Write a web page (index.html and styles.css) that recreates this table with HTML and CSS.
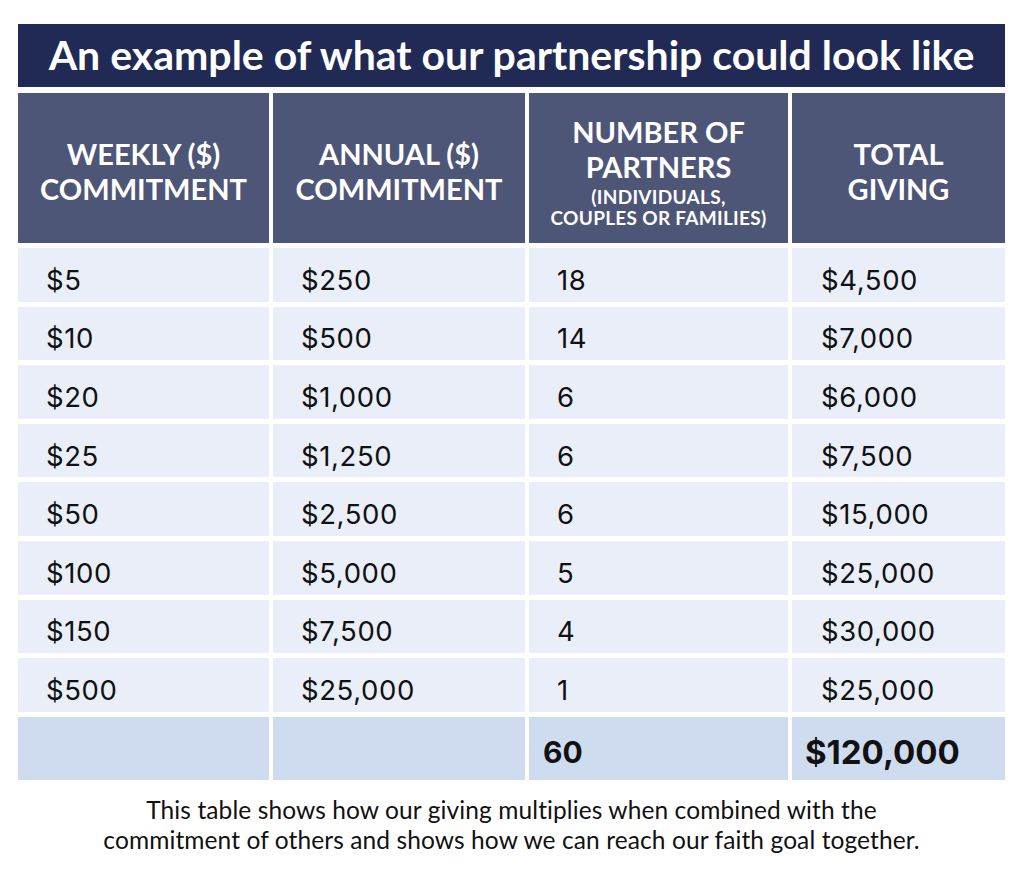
FILE: index.html
```html
<!DOCTYPE html>
<html lang="en">
<head>
<meta charset="utf-8">
<title>Partnership example</title>
<link rel="stylesheet" href="styles.css">
</head>
<body>
<main class="page">
  <h1 class="title">An example of what our partnership could look like</h1>
  <div class="grid">
    <div class="hcell">WEEKLY ($)<br>COMMITMENT</div>
    <div class="hcell">ANNUAL ($)<br>COMMITMENT</div>
    <div class="hcell">NUMBER OF<br>PARTNERS<span class="sub">(INDIVIDUALS,<br>COUPLES OR FAMILIES)</span></div>
    <div class="hcell">TOTAL<br>GIVING</div>

    <div class="cell">$5</div><div class="cell">$250</div><div class="cell">18</div><div class="cell c4">$4,500</div>
    <div class="cell">$10</div><div class="cell">$500</div><div class="cell">14</div><div class="cell c4">$7,000</div>
    <div class="cell">$20</div><div class="cell">$1,000</div><div class="cell">6</div><div class="cell c4">$6,000</div>
    <div class="cell">$25</div><div class="cell">$1,250</div><div class="cell">6</div><div class="cell c4">$7,500</div>
    <div class="cell">$50</div><div class="cell">$2,500</div><div class="cell">6</div><div class="cell c4">$15,000</div>
    <div class="cell">$100</div><div class="cell">$5,000</div><div class="cell">5</div><div class="cell c4">$25,000</div>
    <div class="cell">$150</div><div class="cell">$7,500</div><div class="cell">4</div><div class="cell c4">$30,000</div>
    <div class="cell">$500</div><div class="cell">$25,000</div><div class="cell">1</div><div class="cell c4">$25,000</div>

    <div class="tcell"></div><div class="tcell"></div><div class="tcell num">60</div><div class="tcell big c4">$120,000</div>
  </div>
  <p class="caption">This table shows how our giving multiplies when combined with the<br>commitment of others and shows how we can reach our faith goal together.</p>
</main>
</body>
</html>
```
FILE: styles.css
```css
html, body {
  margin: 0;
  padding: 0;
  background: #ffffff;
}
body {
  font-family: "Lato", "Liberation Sans", sans-serif;
  color: #111111;
}
.page {
  width: 987px;
  margin: 0 0 0 18px;
  padding-top: 24px;
}
.title {
  margin: 0;
  height: 63px;
  background: #202a54;
  color: #ffffff;
  font-size: 41px;
  font-weight: 700;
  line-height: 61px;
  text-align: center;
}
.grid {
  margin-top: 6px;
  display: grid;
  grid-template-columns: 251px 252px 259px 213px;
  grid-template-rows: 150px repeat(8, 53.6px) 63px;
  column-gap: 4px;
  row-gap: 5px;
}
.hcell {
  background: #4e5677;
  color: #ffffff;
  font-weight: 700;
  font-size: 29px;
  line-height: 35px;
  text-align: center;
  display: flex;
  flex-direction: column;
  justify-content: center;
  align-items: center;
  padding-top: 5px;
  box-sizing: border-box;
}
.hcell .sub {
  font-size: 19px;
  line-height: 21px;
  letter-spacing: 0.3px;
  margin-top: 2px;
}
.cell {
  background: #e9eef8;
  font-family: "Inter", "Lato", sans-serif;
  font-size: 27.5px;
  letter-spacing: 0.6px;
  display: flex;
  align-items: center;
  padding-left: 28px;
  padding-top: 10px;
  box-sizing: border-box;
}
.cell.c4 {
  padding-left: 29px;
}
.tcell {
  background: #cfdcef;
  font-family: "Inter", "Lato", sans-serif;
  display: flex;
  align-items: center;
  padding-left: 14px;
  padding-top: 7px;
  box-sizing: border-box;
  font-weight: 700;
  font-size: 30px;
}
.tcell.big {
  font-size: 33px;
  padding-left: 13px;
}
.caption {
  margin: 15px 0 0;
  text-align: center;
  font-size: 24.5px;
  line-height: 30px;
  letter-spacing: 0.1px;
  color: #111111;
}
```
